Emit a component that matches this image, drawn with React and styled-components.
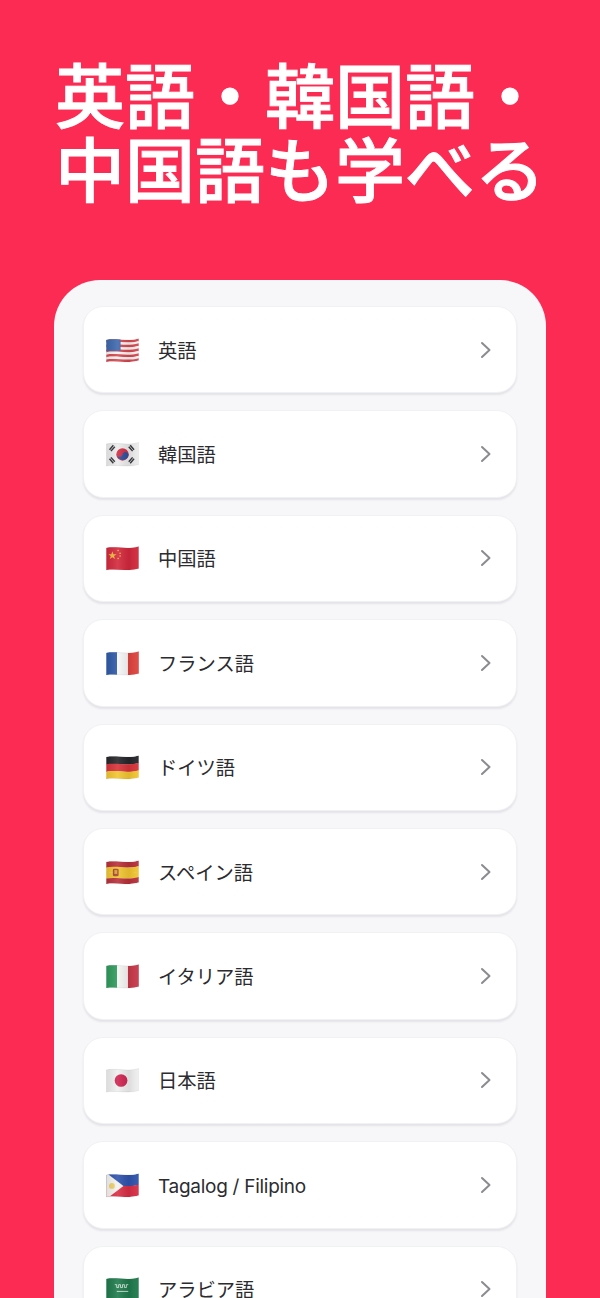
import React from "react";
import styled, { createGlobalStyle } from "styled-components";

const Global = createGlobalStyle`
  html, body { margin: 0; padding: 0; background: #fb2b53; }
  * { box-sizing: border-box; }
`;
const Page = styled.main`
  width: 600px;
  height: 1298px;
  overflow: hidden;
  background: #fb2b53;
  padding: 56px 54px 0;
  font-family: Inter, "Noto Sans CJK JP", sans-serif;
`;
const Title = styled.h1`
  margin: 0 0 0 1px;
  color: #fff;
  font-family: "Noto Sans CJK JP", sans-serif;
  font-size: 70px;
  line-height: 74px;
  font-weight: 500;
  -webkit-text-stroke: 0.9px #fff;
  white-space: nowrap;
`;
const Panel = styled.section`
  margin-top: 76px;
  width: 492px;
  background: #f7f7fa;
  border-radius: 46px 46px 0 0;
  padding: 26px 29px 30px;
`;
const List = styled.ul`
  list-style: none;
  margin: 0;
  padding: 0;
  display: flex;
  flex-direction: column;
  gap: 17px;
`;
const Row = styled.li`
  height: 87.4px;
  background: #fff;
  border-radius: 20px;
  border: 1px solid #f0f1f3;
  box-shadow: 0 2px 2px rgba(40, 44, 60, 0.09);
  display: flex;
  align-items: center;
  padding: 0 24px 0 22px;
`;
const FlagIcon = styled.svg`
  width: 33px;
  height: 26px;
  flex: none;
  margin-right: 19px;
`;
const Label = styled.span`
  flex: 1;
  color: #2c2c30;
  font-size: ${(p) => (p.$latin ? "19px" : "19.3px")};
  letter-spacing: ${(p) => (p.$latin ? "-0.28px" : "0")};
  padding-top: ${(p) => (p.$latin ? "3px" : "0")};
  font-weight: 400;
  white-space: nowrap;
`;
const Chevron = styled.svg`
  width: 12px;
  height: 18px;
  flex: none;
  fill: none;
  stroke: #8b8b90;
  stroke-width: 2;
  stroke-linecap: round;
  stroke-linejoin: round;
`;

const T = 2;
const band = (a, b) =>
  `M0 ${a} C11 ${a - T} 21 ${a + T} 34 ${a - 1.5} L34 ${b - 1.5} C21 ${b + T} 11 ${b - T} 0 ${b} Z`;
const TOP = 3;
const BOTTOM = 26;
const h = (colors) => {
  const step = (BOTTOM - TOP) / colors.length;
  return colors.map((c, i) => (
    <path key={i} d={band(TOP + i * step, TOP + (i + 1) * step + (i < colors.length - 1 ? 0.3 : 0))} fill={c} />
  ));
};
const v = (colors) => {
  const step = 34 / colors.length;
  return colors.map((c, i) => <rect key={i} x={i * step} y="0" width={step + 0.2} height="27" fill={c} />);
};

const Us = () => (
  <>
    {h(["#d8474f", "#f5f2f2", "#d8474f", "#f5f2f2", "#d8474f", "#f5f2f2", "#d8474f", "#f5f2f2", "#d8474f"])}
    <rect x="0" y="0" width="15" height="14.5" fill="#3f68ae" />
  </>
);
const Kr = () => (
  <>
    <rect width="34" height="27" fill="#ececec" />
    <circle cx="17" cy="14" r="6.4" fill="#cf2e45" />
    <path d="M10.8 12.6 A3.1 3.1 0 0 0 17 14 A3.1 3.1 0 0 1 23.2 15.4 A6.4 6.4 0 0 1 10.8 12.6 Z" fill="#2a4f9c" />
    <g stroke="#33343a" strokeWidth="1.5">
      <path d="M3.5 9 L7.5 4.5 M5 10.5 L9 6" />
      <path d="M25 4.5 L29 9 M23.5 6 L27.5 10.5" />
      <path d="M3.5 18.5 L7.5 23 M5 17 L9 21.5" />
      <path d="M25 23 L29 18.5 M23.5 21.5 L27.5 17" />
    </g>
  </>
);
const Cn = () => (
  <>
    <rect width="34" height="27" fill="#d3283c" />
    <path d="M6.5 6.5 L7.6 9.6 L10.8 9.6 L8.2 11.5 L9.2 14.6 L6.5 12.7 L3.8 14.6 L4.8 11.5 L2.2 9.6 L5.4 9.6 Z" fill="#f0b93e" />
    <g fill="#f0b93e">
      <circle cx="12.5" cy="5.8" r="0.8" />
      <circle cx="14.5" cy="8.5" r="0.8" />
      <circle cx="14.5" cy="11.5" r="0.8" />
      <circle cx="12.5" cy="14" r="0.8" />
    </g>
  </>
);
const Fr = () => <>{v(["#2f5aa8", "#f7f7f7", "#e0443e"])}</>;
const De = () => <>{h(["#26262a", "#d8333a", "#f2c531"])}</>;
const Es = () => (
  <>
    {h(["#b9303a", "#f2c531", "#f2c531", "#b9303a"])}
    <rect x="7" y="10" width="6" height="8" rx="1.5" fill="#a8452f" />
    <rect x="8.5" y="11.5" width="3" height="4" fill="#d9a13a" />
  </>
);
const It = () => <>{v(["#2f9a5c", "#f5f5f3", "#c8384a"])}</>;
const Jp = () => (
  <>
    <rect width="34" height="27" fill="#efefef" />
    <circle cx="15.5" cy="14" r="6.6" fill="#cf2350" />
  </>
);
const Ph = () => (
  <>
    {h(["#2f53ad", "#d92e45"])}
    <path d="M-1 0 L18 14.5 L-1 29 Z" fill="#f5f3ee" />
    <circle cx="6" cy="14.5" r="3" fill="#efd06c" />
  </>
);
const Sa = () => (
  <>
    <rect width="34" height="27" fill="#1f7a4c" />
    <path d="M9 9 h2 v3 h2 v-3 h2 v3 h2 v-3 h2 v3 h2 v-3 h2 M11 16 h12" fill="none" stroke="#d7e8dc" strokeWidth="0.9" />
  </>
);

const flagOutline = `M0 ${TOP} C11 ${TOP - T} 21 ${TOP + T} 34 ${TOP - 1.5} L34 ${BOTTOM - 1.5} C21 ${BOTTOM + T} 11 ${BOTTOM - T} 0 ${BOTTOM} Z`;

const Flag = ({ id, children }) => (
  <FlagIcon viewBox="0 0 34 27" aria-hidden="true">
    <defs>
      <clipPath id={`clip-${id}`}>
        <path d={flagOutline} />
      </clipPath>
      <linearGradient id={`shade-${id}`} x1="0" x2="1" y1="0" y2="0">
        <stop offset="0" stopColor="#000" stopOpacity="0.08" />
        <stop offset="0.35" stopColor="#fff" stopOpacity="0.1" />
        <stop offset="0.7" stopColor="#000" stopOpacity="0.08" />
        <stop offset="1" stopColor="#fff" stopOpacity="0.05" />
      </linearGradient>
    </defs>
    <g clipPath={`url(#clip-${id})`}>
      {children}
      <rect width="34" height="27" fill={`url(#shade-${id})`} />
    </g>
    <path d={flagOutline} fill="none" stroke="rgba(0,0,0,0.12)" strokeWidth="0.5" />
  </FlagIcon>
);

const languages = [
  ["us", "英語", <Us />],
  ["kr", "韓国語", <Kr />],
  ["cn", "中国語", <Cn />],
  ["fr", "フランス語", <Fr />],
  ["de", "ドイツ語", <De />],
  ["es", "スペイン語", <Es />],
  ["it", "イタリア語", <It />],
  ["jp", "日本語", <Jp />],
  ["ph", "Tagalog / Filipino", <Ph />, true],
  ["sa", "アラビア語", <Sa />],
];

export default function App() {
  return (
    <Page>
      <Global />
      <Title>
        英語・韓国語・
        <br />
        中国語も学べる
      </Title>
      <Panel>
        <List>
          {languages.map(([id, name, art, latin]) => (
            <Row key={id}>
              <Flag id={id}>{art}</Flag>
              <Label $latin={latin}>{name}</Label>
              <Chevron viewBox="0 0 12 18" aria-hidden="true">
                <path d="M2 2 L9.5 9 L2 16" />
              </Chevron>
            </Row>
          ))}
        </List>
      </Panel>
    </Page>
  );
}
